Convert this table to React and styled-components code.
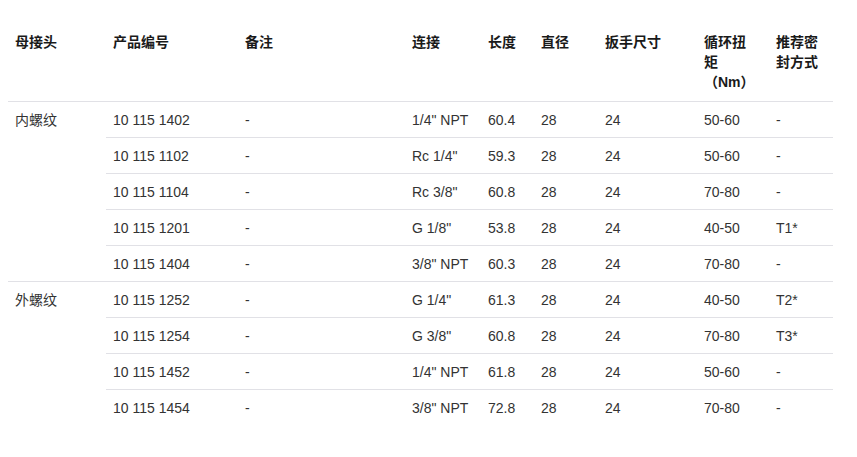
import React from "react";
import styled, { createGlobalStyle } from "styled-components";

const Global = createGlobalStyle`
  html, body { margin: 0; padding: 0; background: #fff; }
  body { padding: 8px; font-family: "Liberation Sans", Arial, "Noto Sans CJK SC", sans-serif; }
`;

const Table = styled.table`
  margin-top: 16px;
  width: 825px;
  border-collapse: collapse;
  table-layout: fixed;
  font-size: 14px;
  line-height: 20px;
  color: #333;
`;

const HeadCell = styled.th`
  text-align: left;
  vertical-align: top;
  font-weight: bold;
  color: #1a1a1a;
  padding: 8px 12px 9px 7px;
  border-bottom: 1px solid #e1e1e6;
`;

const Cell = styled.td`
  vertical-align: top;
  padding: 8px 12px 7px 7px;
  border-top: ${(p) => (p.$noTop ? "none" : "1px solid #e1e1e6")};
  white-space: nowrap;
`;

const cols = [98, 132, 167, 76, 53, 64, 99, 72, 64];
const headers = ["母接头", "产品编号", "备注", "连接", "长度", "直径", "扳手尺寸", "循环扭矩（Nm）", "推荐密封方式"];

const groups = [
  {
    name: "内螺纹",
    rows: [
      ["10 115 1402", "-", "1/4\" NPT", "60.4", "28", "24", "50-60", "-"],
      ["10 115 1102", "-", "Rc 1/4\"", "59.3", "28", "24", "50-60", "-"],
      ["10 115 1104", "-", "Rc 3/8\"", "60.8", "28", "24", "70-80", "-"],
      ["10 115 1201", "-", "G 1/8\"", "53.8", "28", "24", "40-50", "T1*"],
      ["10 115 1404", "-", "3/8\" NPT", "60.3", "28", "24", "70-80", "-"],
    ],
  },
  {
    name: "外螺纹",
    rows: [
      ["10 115 1252", "-", "G 1/4\"", "61.3", "28", "24", "40-50", "T2*"],
      ["10 115 1254", "-", "G 3/8\"", "60.8", "28", "24", "70-80", "T3*"],
      ["10 115 1452", "-", "1/4\" NPT", "61.8", "28", "24", "50-60", "-"],
      ["10 115 1454", "-", "3/8\" NPT", "72.8", "28", "24", "70-80", "-"],
    ],
  },
];

export default function App() {
  return (
    <>
      <Global />
      <Table>
        <colgroup>
          {cols.map((w, i) => (
            <col key={i} style={{ width: w }} />
          ))}
        </colgroup>
        <thead>
          <tr>
            {headers.map((h) => (
              <HeadCell key={h}>{h}</HeadCell>
            ))}
          </tr>
        </thead>
        <tbody>
          {groups.map((g, gi) =>
            g.rows.map((r, ri) => (
              <tr key={gi + "-" + ri}>
                {ri === 0 && (
                  <Cell rowSpan={g.rows.length} $noTop={gi === 0}>
                    {g.name}
                  </Cell>
                )}
                {r.map((c, ci) => (
                  <Cell key={ci} $noTop={gi === 0 && ri === 0}>
                    {c}
                  </Cell>
                ))}
              </tr>
            ))
          )}
        </tbody>
      </Table>
    </>
  );
}
